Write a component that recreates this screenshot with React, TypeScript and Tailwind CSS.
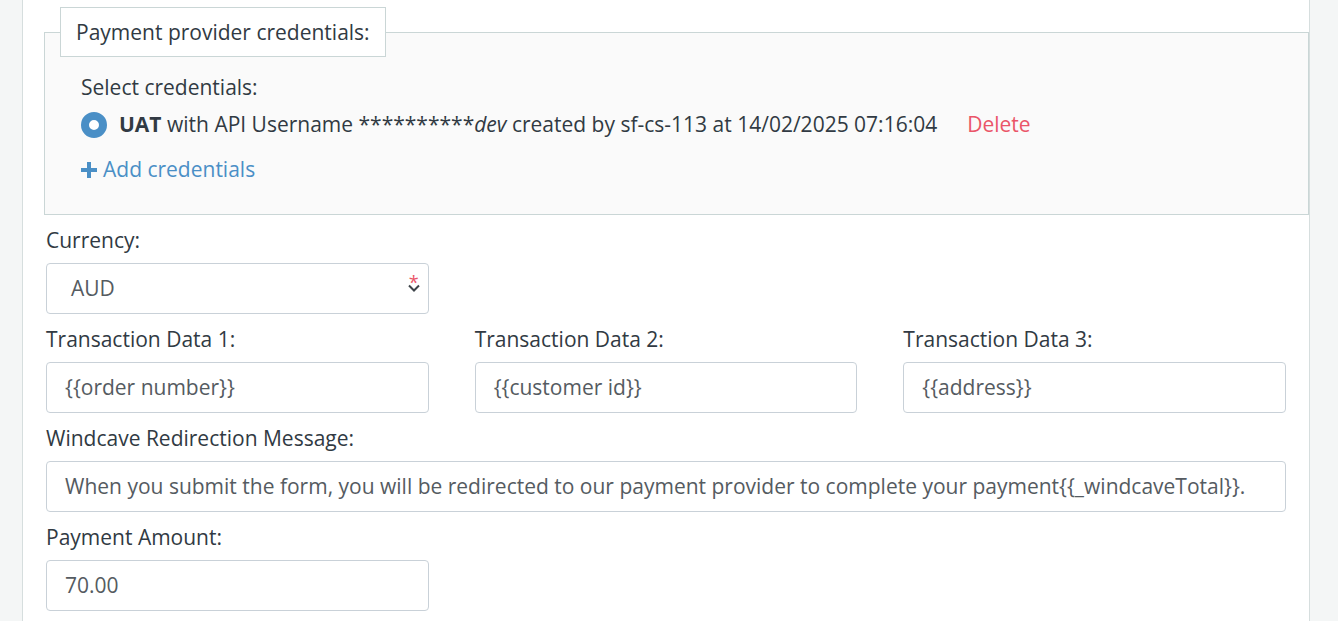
import React from 'react';

const fieldClass =
  'h-[51px] w-full rounded-[4px] border border-[#c9d1d8] bg-white px-[18px] flex items-center text-[21px] text-[#555b61]';

const Field: React.FC<{ label: string; value: string; className?: string }> = ({ label, value, className }) => (
  <div className={className}>
    <div className="leading-[27px] mb-[9px] text-[#313a43]">{label}</div>
    <div className={fieldClass}>
      <span className="whitespace-nowrap">{value}</span>
    </div>
  </div>
);

const App: React.FC = () => {
  return (
    <div
      className="flex h-[621px] w-[1338px] overflow-hidden bg-[#f4f6f6] text-[21px]"
      style={{ fontFamily: '"Open Sans", "Noto Sans", sans-serif' }}
    >
      {/* left gutter */}
      <div className="w-[23px] shrink-0 border-r border-[#d6dede] bg-[#f4f6f6]" />

      {/* main panel */}
      <div className="w-[1287px] shrink-0 border-r border-[#d6dede] bg-white pl-[21px] pt-[7px]">
        <fieldset className="border border-[#cad6d6] bg-[#fafafa] pl-[36px] pb-[31px]">
          <legend className="-ml-[21px] border border-[#cad6d6] bg-white px-[15px] pt-[11px] pb-[10px] leading-[27px] text-[#313a43]">
            Payment provider credentials:
          </legend>
          <div className="pt-[17px] leading-[27px] text-[#313a43]">Select credentials:</div>
          <div className="mt-[10px] flex items-center leading-[27px] text-[#313a43]">
            <div className="h-[26px] w-[26px] rounded-full border-[8px] border-[#4a8fc6] bg-white" />
            <span className="ml-[12px] whitespace-nowrap">
              <b className="font-bold">UAT</b> with API Username **********<i>dev</i> created by sf-cs-113 at
              14/02/2025 07:16:04
            </span>
            <span className="ml-[30px] text-[#ea5568]">Delete</span>
          </div>
          <div className="mt-[18px] flex items-center leading-[27px] text-[#4a8fc6]">
            <svg width="16" height="16" viewBox="0 0 16 16" className="mr-[6px]">
              <path d="M6 0h4v6h6v4h-6v6h-4v-6h-6v-4h6z" fill="#4a8fc6" />
            </svg>
            <span>Add credentials</span>
          </div>
        </fieldset>

        <div className="ml-[2px] mr-[23px] pt-[12px]">
          <div className="grid grid-cols-3 gap-x-[46px]">
            <div className="mb-[12px]">
              <div className="leading-[27px] mb-[9px] text-[#313a43]">Currency:</div>
              <div className={`${fieldClass} relative pl-[24px]`}>
                <span>AUD</span>
                <span className="absolute right-[9px] top-[9px] text-[18px] leading-[18px] text-[#ea5568]">*</span>
                <svg
                  width="12"
                  height="8"
                  viewBox="0 0 12 8"
                  className="absolute right-[8px] top-[20px]"
                >
                  <path d="M1 1.5l5 5 5-5" fill="none" stroke="#3d444a" strokeWidth="2" />
                </svg>
              </div>
            </div>
          </div>

          <div className="grid grid-cols-3 gap-x-[46px] mb-[12px]">
            <Field label="Transaction Data 1:" value="{{order number}}" />
            <Field label="Transaction Data 2:" value="{{customer id}}" />
            <Field label="Transaction Data 3:" value="{{address}}" />
          </div>

          <Field
            className="mb-[12px]"
            label="Windcave Redirection Message:"
            value="When you submit the form, you will be redirected to our payment provider to complete your payment{{_windcaveTotal}}."
          />

          <div className="grid grid-cols-3 gap-x-[46px]">
            <Field label="Payment Amount:" value="70.00" />
          </div>
        </div>
      </div>

      {/* right gutter */}
      <div className="flex-1 bg-[#f4f6f6]" />
    </div>
  );
};

export default App;
